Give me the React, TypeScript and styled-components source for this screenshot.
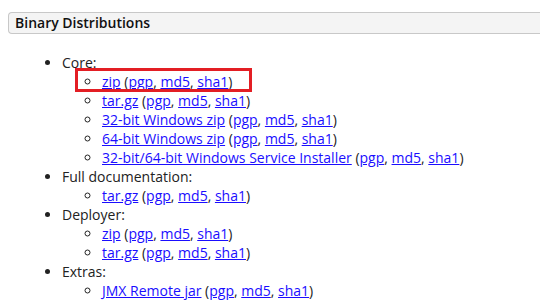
import React from "react";
import styled, { createGlobalStyle } from "styled-components";

const Global = createGlobalStyle`
  html, body { margin: 0; padding: 0; background: #fff; overflow: hidden; }
  body { padding: 12px 0 0 8px; font-family: "Open Sans", "DejaVu Sans", sans-serif; font-size: 14px; color: #222; }
`;

const Header = styled.div`
  height: 20px;
  border: 1px solid #c8c8c8;
  border-right: none;
  border-radius: 4px 0 0 4px;
  background: #f4f4f4;
  padding: 0 6px;
  font-weight: 600;
  font-size: 14px;
  line-height: 20px;
  color: #111;
`;

const Outer = styled.ul`
  list-style: disc;
  margin: 19px 0 0 0;
  padding-left: 54px;
  line-height: 19px;
`;

const Inner = styled.ul`
  list-style: circle;
  margin: 0;
  padding-left: 40px;
`;

const Item = styled.li`
  position: relative;
`;

const Link = styled.a`
  color: #1a0dff;
  text-decoration: underline;
`;

const Highlight = styled.span`
  position: absolute;
  left: -27px;
  top: -4px;
  width: 177px;
  height: 24px;
  box-sizing: border-box;
  border: 3px solid #e31e24;
  pointer-events: none;
`;

type Dist = { name: string; boxed?: boolean };

const Row = ({ d }: { d: Dist }) => (
  <Item>
    {d.boxed && <Highlight />}
    <Link href="#">{d.name}</Link> (<Link href="#">pgp</Link>, <Link href="#">md5</Link>,{" "}
    <Link href="#">sha1</Link>)
  </Item>
);

const groups: { title: string; items: Dist[] }[] = [
  {
    title: "Core:",
    items: [
      { name: "zip", boxed: true },
      { name: "tar.gz" },
      { name: "32-bit Windows zip" },
      { name: "64-bit Windows zip" },
      { name: "32-bit/64-bit Windows Service Installer" },
    ],
  },
  { title: "Full documentation:", items: [{ name: "tar.gz" }] },
  { title: "Deployer:", items: [{ name: "zip" }, { name: "tar.gz" }] },
  { title: "Extras:", items: [{ name: "JMX Remote jar" }] },
];

export default function App() {
  return (
    <>
      <Global />
      <Header>Binary Distributions</Header>
      <Outer>
        {groups.map((g) => (
          <li key={g.title}>
            {g.title}
            <Inner>
              {g.items.map((d, i) => (
                <Row key={i} d={d} />
              ))}
            </Inner>
          </li>
        ))}
      </Outer>
    </>
  );
}
